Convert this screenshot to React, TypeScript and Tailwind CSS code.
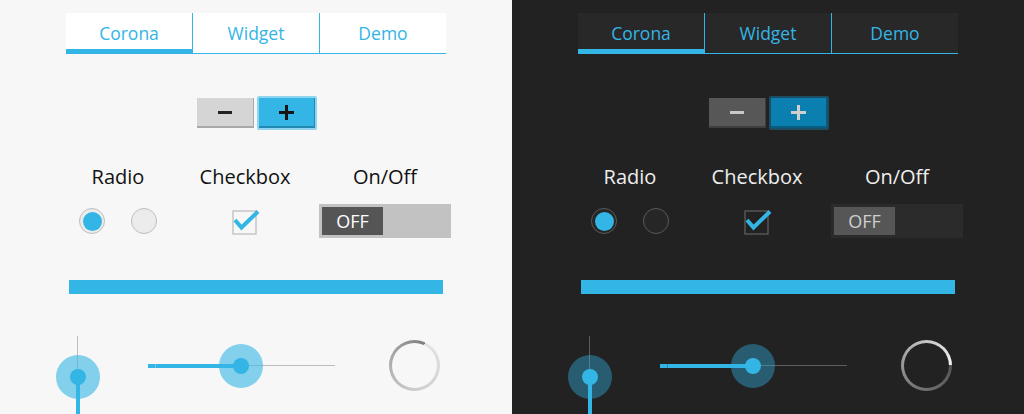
import React from 'react';

type Theme = 'light' | 'dark';

const font = { fontFamily: '"Open Sans", "Liberation Sans", sans-serif' };

function Tabs({ t }: { t: Theme }) {
  const tabs = ['Corona', 'Widget', 'Demo'];
  return (
    <div className={`ml-[66px] mt-[13px] flex h-[42px] w-[380px] ${t === 'light' ? 'bg-white' : 'bg-[#282828]'}`}>
      {tabs.map((name, i) => (
        <div
          key={name}
          className={`flex flex-1 items-center justify-center text-[17.5px] text-[#33b5e5] ${
            i > 0 ? 'border-l border-[#33b5e5]' : ''
          } ${i === 0 ? 'border-b-[5px] border-b-[#33b5e5] pt-[3px]' : 'border-b border-b-[#33b5e5] pb-[1px]'}`}
        >
          {name}
        </div>
      ))}
    </div>
  );
}

function Stepper({ t }: { t: Theme }) {
  const light = t === 'light';
  return (
    <div className="mt-[42px] flex items-center justify-center gap-[3px] pl-[2px]">
      <div
        className={`flex h-[30px] w-[57px] items-center justify-center border-b-2 border-r ${
          light ? 'border-[#a9a9a9] bg-[#d5d5d5]' : 'border-[#3e3e3e] bg-[#575757]'
        }`}
      >
        <div className={`h-[3px] w-[14px] ${light ? 'bg-[#222]' : 'bg-[#c8c8c8]'}`} />
      </div>
      <div className={`rounded-[2px] p-[2px] ${light ? 'bg-[#8fd4f1]' : 'bg-[#1b4e64]'}`}>
        <div
          className={`relative flex h-[30px] w-[56px] items-center justify-center border-b-2 border-r ${
            light ? 'border-[#2389b0] bg-[#33b5e5]' : 'border-[#075e80] bg-[#0a7fb0]'
          }`}
        >
          <div className={`absolute h-[3px] w-[15px] ${light ? 'bg-[#151515]' : 'bg-[#cfcfcf]'}`} />
          <div className={`absolute h-[15px] w-[3px] ${light ? 'bg-[#151515]' : 'bg-[#cfcfcf]'}`} />
        </div>
      </div>
    </div>
  );
}

function Radio({ t, on }: { t: Theme; on?: boolean }) {
  const light = t === 'light';
  return (
    <div
      className={`flex h-[26px] w-[26px] items-center justify-center rounded-full border-[1.5px] ${
        light ? 'border-[#bdbdbd] bg-[#ececec]' : 'border-[#5a5a5a] bg-[#262626]'
      }`}
    >
      {on && <div className="h-[19px] w-[19px] rounded-full bg-[#33b5e5]" />}
    </div>
  );
}

function Checkbox({ t }: { t: Theme }) {
  const light = t === 'light';
  return (
    <svg width="30" height="26" viewBox="0 0 30 26" className="ml-[4px]">
      <rect x="1" y="1" width="23" height="23" fill="none" stroke={light ? '#c6c6c6' : '#565656'} strokeWidth="1.5" />
      <polyline points="3,10 9.5,17.5 26,1.5" fill="none" stroke="#33b5e5" strokeWidth="4" strokeLinejoin="miter" />
    </svg>
  );
}

function Switch({ t }: { t: Theme }) {
  const light = t === 'light';
  return (
    <div className={`flex h-[34px] w-[132px] items-center p-[3px] ${light ? 'bg-[#c2c2c2]' : 'bg-[#2b2b2b]'}`}>
      <div
        className={`flex h-[28px] w-[61px] items-center justify-center text-[18px] ${
          light ? 'bg-[#555] text-white' : 'bg-[#565656] text-[#cfcfcf]'
        }`}
      >
        OFF
      </div>
    </div>
  );
}

function Controls({ t }: { t: Theme }) {
  const light = t === 'light';
  const label = `h-[26px] text-[20px] leading-[26px] ${light ? 'text-[#111]' : 'text-[#eee]'}`;
  return (
    <div className="mt-[34px] ml-[66px] flex">
      <div className="flex w-[104px] flex-col items-center">
        <div className={label}>Radio</div>
        <div className="mt-[18px] flex gap-[26px]">
          <Radio t={t} on />
          <Radio t={t} />
        </div>
      </div>
      <div className="ml-[15px] flex w-[120px] flex-col items-center">
        <div className={label}>Checkbox</div>
        <div className="mt-[20px]">
          <Checkbox t={t} />
        </div>
      </div>
      <div className="ml-[14px] flex w-[132px] flex-col items-center">
        <div className={label}>On/Off</div>
        <div className="mt-[14px]">
          <Switch t={t} />
        </div>
      </div>
    </div>
  );
}

function VSlider({ t }: { t: Theme }) {
  const light = t === 'light';
  return (
    <div className="relative ml-[56px] h-[78px] w-[44px]">
      <div className={`absolute left-[21px] top-0 h-[41px] w-[1px] ${light ? 'bg-[#bdbdbd]' : 'bg-[#5d5d5d]'}`} />
      <div className="absolute bottom-0 left-[20px] top-[41px] w-[4px] bg-[#33b5e5]" />
      <div
        className={`absolute left-0 top-[19px] flex h-[44px] w-[44px] items-center justify-center rounded-full ${
          light ? 'bg-[#33b5e5]/60' : 'bg-[#33b5e5]/40'
        }`}
      >
        <div className="h-[16px] w-[16px] rounded-full bg-[#33b5e5]" />
      </div>
    </div>
  );
}

function HSlider({ t }: { t: Theme }) {
  const light = t === 'light';
  return (
    <div className="relative ml-[48px] mt-[8px] h-[44px] w-[187px]">
      <div className="absolute left-0 top-[20px] h-[4px] w-[93px] bg-[#33b5e5]" />
      <div className={`absolute left-[7px] top-[20px] h-[4px] w-[1px] ${light ? 'bg-[#6cc9ec]' : 'bg-[#2a8cb1]'}`} />
      <div className={`absolute left-[93px] right-0 top-[21px] h-[1px] ${light ? 'bg-[#bdbdbd]' : 'bg-[#5d5d5d]'}`} />
      <div
        className={`absolute left-[71px] top-0 flex h-[44px] w-[44px] items-center justify-center rounded-full ${
          light ? 'bg-[#33b5e5]/60' : 'bg-[#33b5e5]/40'
        }`}
      >
        <div className="h-[16px] w-[16px] rounded-full bg-[#33b5e5]" />
      </div>
    </div>
  );
}

function Spinner({ t }: { t: Theme }) {
  const light = t === 'light';
  return (
    <div
      className={`ml-[54px] mt-[4px] h-[51px] w-[51px] rounded-full p-[3px] ${
        light
          ? 'bg-[conic-gradient(from_25deg,#e4e4e4,#cfcfcf_40%,#a8a8a8_75%,#7e7e7e)]'
          : 'bg-[conic-gradient(from_90deg,#555,#7a7a7a_35%,#bdbdbd_70%,#f2f2f2)]'
      }`}
    >
      <div className={`h-full w-full rounded-full ${light ? 'bg-[#f7f7f7]' : 'bg-[#222]'}`} />
    </div>
  );
}

function Panel({ t }: { t: Theme }) {
  return (
    <div className={`flex h-[414px] w-[512px] flex-col overflow-hidden ${t === 'light' ? 'bg-[#f7f7f7]' : 'bg-[#222]'}`}>
      <Tabs t={t} />
      <Stepper t={t} />
      <Controls t={t} />
      {/* progress */}
      <div className="ml-[69px] mt-[42px] h-[14px] w-[374px] bg-[#33b5e5]" />
      <div className="mt-[42px] flex items-start">
        <VSlider t={t} />
        <HSlider t={t} />
        <Spinner t={t} />
      </div>
    </div>
  );
}

export default function App() {
  return (
    <div className="flex h-[414px] w-[1024px]" style={font}>
      <Panel t="light" />
      <Panel t="dark" />
    </div>
  );
}
